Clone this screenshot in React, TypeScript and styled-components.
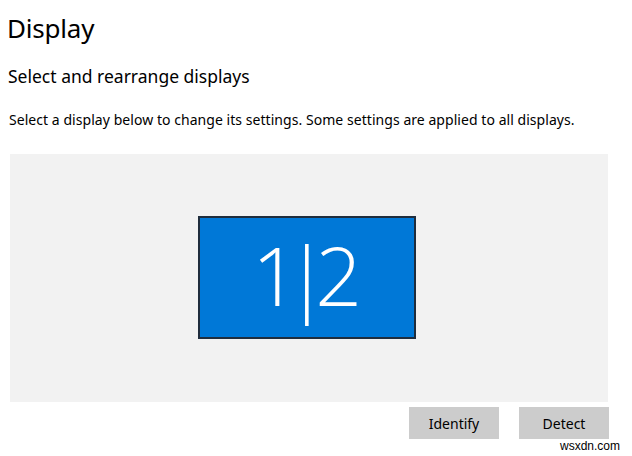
import React from "react";
import styled, { createGlobalStyle } from "styled-components";

const Global = createGlobalStyle`
  html, body { margin: 0; padding: 0; background: #fff; }
  body { font-family: "Noto Sans", "Open Sans", sans-serif; color: #000; }
`;

const Page = styled.div`
  width: 632px; height: 456px; position: relative; overflow: hidden;
  display: flex; flex-direction: column; padding: 0 0 0 7px; box-sizing: border-box;
`;
const Title = styled.h1`
  margin: 11px 0 0 0; font-size: 26px; font-weight: 400; line-height: 34px; letter-spacing: -0.2px;
`;
const Sub = styled.h2`
  margin: 19px 0 0 1px; font-size: 17.5px; font-weight: 400; line-height: 24px;
`;
const Body = styled.p`
  margin: 23px 0 0 2px; font-size: 14px; line-height: 18px; letter-spacing: 0.05px;
`;
const Arrange = styled.div`
  margin: 25px 0 0 3px; width: 598px; height: 248px; background: #f2f2f2;
  display: flex; padding: 62px 0 0 188px; box-sizing: border-box;
`;
const Monitor = styled.div`
  width: 218px; height: 123px; background: #0078d7; border: 2px solid #1f2d3d;
  box-sizing: border-box; display: flex; align-items: center; justify-content: center;
  color: #fff; font-family: "Open Sans", sans-serif; font-weight: 300; font-size: 82px; line-height: 1;
  padding-bottom: 8px; letter-spacing: -14px; text-indent: -14px;
`;
const Buttons = styled.div`
  display: flex; gap: 20px; margin: 5px 0 0 402px;
`;
const Button = styled.button`
  width: 90px; height: 32px; border: none; background: #cccccc; font-family: inherit;
  font-size: 14px; color: #000; padding: 0;
`;
const Mark = styled.span`
  position: absolute; right: 12px; bottom: 3px; font-size: 12px; color: #000;
  font-family: "Liberation Sans", sans-serif;
`;

export default function App() {
  return (
    <>
      <Global />
      <Page>
        <Title>Display</Title>
        <Sub>Select and rearrange displays</Sub>
        <Body>Select a display below to change its settings. Some settings are applied to all displays.</Body>
        <Arrange>
          <Monitor>1|2</Monitor>
        </Arrange>
        <Buttons>
          <Button>Identify</Button>
          <Button>Detect</Button>
        </Buttons>
        <Mark>wsxdn.com</Mark>
      </Page>
    </>
  );
}
